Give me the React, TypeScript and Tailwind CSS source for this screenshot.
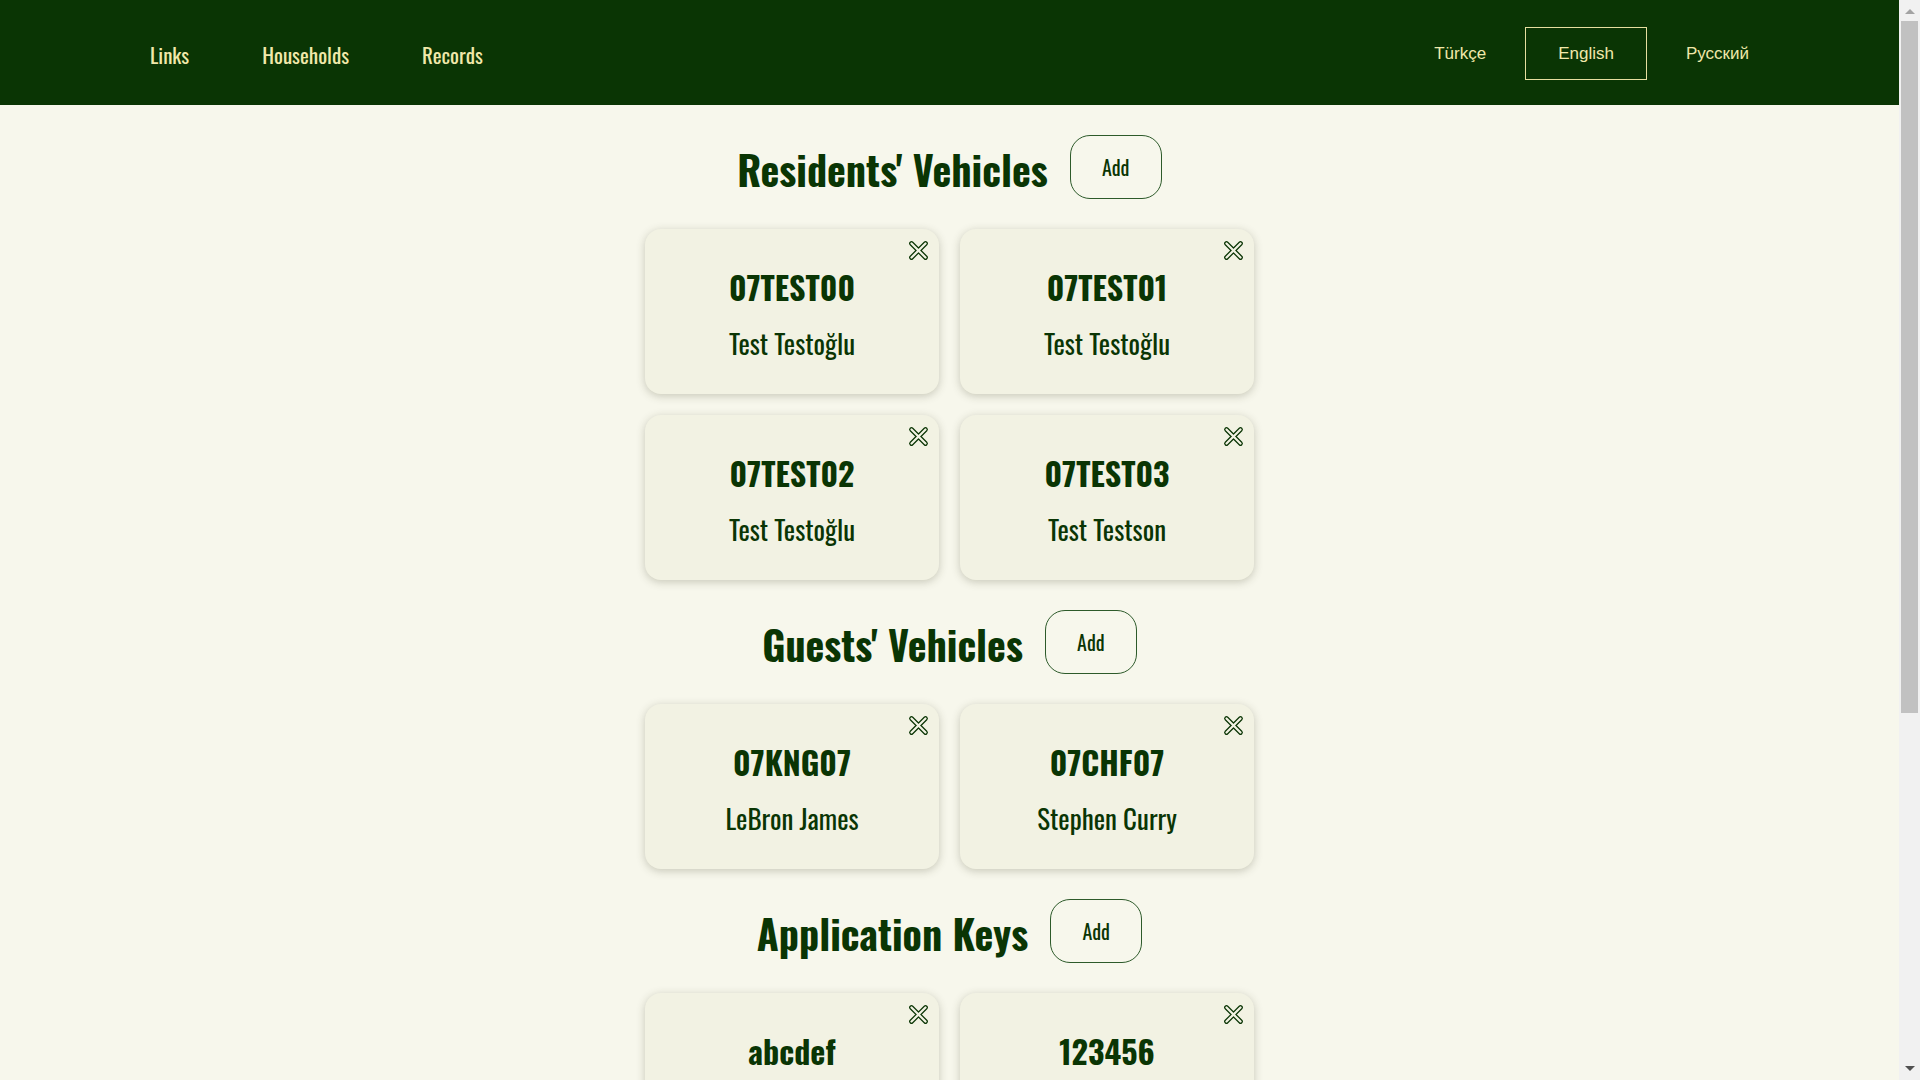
const cond = "font-['Oswald','Liberation_Sans_Narrow','DejaVu_Sans_Condensed',sans-serif]";

type Item = { title: string; sub?: string };

const residents: Item[] = [
  { title: "07TEST00", sub: "Test Testoğlu" },
  { title: "07TEST01", sub: "Test Testoğlu" },
  { title: "07TEST02", sub: "Test Testoğlu" },
  { title: "07TEST03", sub: "Test Testson" },
];

const guests: Item[] = [
  { title: "07KNG07", sub: "LeBron James" },
  { title: "07CHF07", sub: "Stephen Curry" },
];

const keys: Item[] = [{ title: "abcdef" }, { title: "123456" }];

function CloseIcon() {
  return (
    <svg width="21" height="21" viewBox="0 0 24 24" fill="none">
      <path d="M4 4L20 20M20 4L4 20" stroke="#0a3504" strokeWidth="5.4" strokeLinecap="round" />
      <path d="M4 4L20 20M20 4L4 20" stroke="#f2f2e3" strokeWidth="2.6" strokeLinecap="round" />
    </svg>
  );
}

function Card({ item }: { item: Item }) {
  return (
    <div className="relative flex h-[165px] w-[294px] flex-col items-center rounded-2xl bg-[#f2f2e3] pt-[35px] shadow-[0_2px_8px_rgba(60,60,30,0.25)]">
      <button className="absolute right-[10px] top-[11px]">
        <CloseIcon />
      </button>
      <div className={`${cond} text-[32px] font-bold leading-[46px] text-[#0a3504]`}>{item.title}</div>
      {item.sub && (
        <div className={`${cond} mt-[16px] text-[27px] leading-[34px] text-[#0a3504]`}>{item.sub}</div>
      )}
    </div>
  );
}

function Section({ title, items }: { title: string; items: Item[] }) {
  return (
    <section className="flex flex-col items-center">
      <div className="mb-[30px] mt-[30px] flex items-center gap-[22px]">
        <h2 className={`${cond} pt-[3px] text-[40px] font-bold leading-none text-[#0a3504]`}>{title}</h2>
        <button
          className={`${cond} h-[64px] w-[92px] rounded-[20px] border border-[#2d5a2a] text-[20px] text-[#0a3504]`}
        >
          Add
        </button>
      </div>
      <div className="grid grid-cols-2 gap-[21px]">
        {items.map((it) => (
          <Card key={it.title} item={it} />
        ))}
      </div>
    </section>
  );
}

function Scrollbar() {
  return (
    <aside className="sticky top-0 flex h-screen w-[21px] shrink-0 flex-col items-center bg-[#f1f1f1]">
      <div className="mt-[9px] h-0 w-0 border-x-[5px] border-b-[5px] border-x-transparent border-b-[#a3a3a3]" />
      <div className="mt-[7px] h-[692px] w-[17px] bg-[#c1c1c1]" />
      <div className="mt-auto mb-[9px] h-0 w-0 border-x-[5px] border-t-[5px] border-x-transparent border-t-[#505050]" />
    </aside>
  );
}

export default function App() {
  return (
    <div className="flex min-h-screen bg-[#f7f7ec]">
      <div className="min-w-0 flex-1">
        <header className="flex h-[105px] items-center justify-between bg-[#0a3504] pl-[150px] pr-[117px]">
          <nav className={`${cond} flex gap-[73px] pt-[4px] text-[21px] text-[#f0e8aa]`}>
            <a href="#">Links</a>
            <a href="#">Households</a>
            <a href="#">Records</a>
          </nav>
          <div className="flex gap-[6px] pt-[2px] font-['Liberation_Sans',Arial,sans-serif] text-[17px] text-[#f0e8aa]">
            <button className="h-[53px] border border-transparent px-[32px]">Türkçe</button>
            <button className="h-[53px] border border-[#e6dfa0] px-[32px]">English</button>
            <button className="h-[53px] border border-transparent px-[32px]">Русский</button>
          </div>
        </header>
        <main className="pb-[470px]">
          <Section title="Residents' Vehicles" items={residents} />
          <Section title="Guests' Vehicles" items={guests} />
          <Section title="Application Keys" items={keys} />
        </main>
      </div>
      <Scrollbar />
    </div>
  );
}
